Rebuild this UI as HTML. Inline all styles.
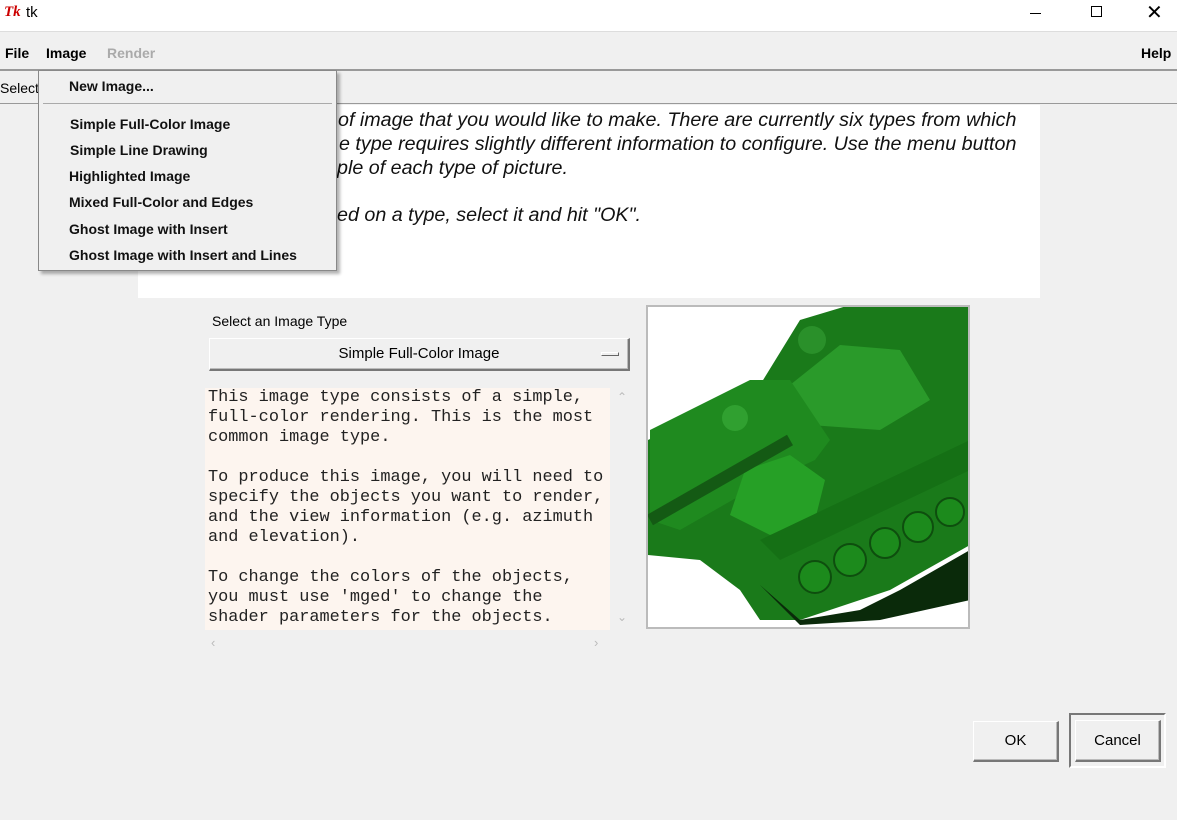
<!DOCTYPE html>
<html><head><style>
*{margin:0;padding:0;box-sizing:border-box}
body{width:1177px;height:820px;background:#f0f0f0;position:relative;overflow:hidden;font-family:"Liberation Sans",sans-serif}
.a{position:absolute}
.mi{position:absolute;left:30px;font-weight:bold;font-size:14px;color:#111}
.it{position:absolute;font-style:italic;font-size:19.7px;color:#111;white-space:pre}
.mono{font-family:"Liberation Mono",monospace;font-size:16.9px;line-height:20px;color:#222;white-space:pre}
.btn{position:absolute;background:#f0f0f0;border:1px solid #fff;border-right:2px solid #777;border-bottom:2px solid #777;box-shadow:inset -1px -1px #bbb;font-size:15px;text-align:center}
</style></head><body>
<div class="a" style="left:0;top:0;width:1177px;height:31px;background:#fff"></div>
<div class="a" style="left:4px;top:4px;color:#c00;font-style:italic;font-weight:bold;font-size:15px;font-family:'Liberation Serif',serif">Tk</div>
<div class="a" style="left:26px;top:4px;font-size:15px">tk</div>
<div class="a" style="left:1030px;top:13px;width:11px;height:1px;background:#000"></div>
<div class="a" style="left:1091px;top:6px;width:11px;height:11px;border:1px solid #000"></div>
<div class="a" style="left:1146px;top:0;font-size:20px;font-weight:300">✕</div>
<div class="a" style="left:0;top:31px;width:1177px;height:1px;background:#ddd"></div>
<div class="a" style="left:5px;top:45px;font-weight:bold;font-size:14px">File</div>
<div class="a" style="left:46px;top:45px;font-weight:bold;font-size:14px">Image</div>
<div class="a" style="left:107px;top:45px;font-weight:bold;font-size:14px;color:#aaa">Render</div>
<div class="a" style="left:1141px;top:45px;font-weight:bold;font-size:14px">Help</div>
<div class="a" style="left:0;top:69px;width:1177px;height:2px;background:#999"></div>
<div class="a" style="left:0;top:80px;font-size:14px">Select</div>
<div class="a" style="left:0;top:103px;width:1177px;height:1px;background:#999"></div>
<div class="a" style="left:138px;top:105px;width:902px;height:193px;background:#fff"></div>
<div class="it" style="left:338px;top:109px">of image that you would like to make. There are currently six types from which</div>
<div class="it" style="left:339px;top:133px">e type requires slightly different information to configure. Use the menu button</div>
<div class="it" style="left:337px;top:157px">ple of each type of picture.</div>
<div class="it" style="left:337px;top:204px">ed on a type, select it and hit "OK".</div>

<div class="a" style="left:38px;top:70px;width:299px;height:201px;background:#f0f0f0;border:1px solid #888;box-shadow:3px 3px 3px rgba(0,0,0,.3)">
<div class="mi" style="top:7px">New Image...</div>
<div class="a" style="left:4px;top:32px;width:289px;height:1px;background:#aaa"></div>
<div class="mi" style="top:45px;left:31px">Simple Full-Color Image</div>
<div class="mi" style="top:71px;left:31px">Simple Line Drawing</div>
<div class="mi" style="top:97px">Highlighted Image</div>
<div class="mi" style="top:123px">Mixed Full-Color and Edges</div>
<div class="mi" style="top:150px">Ghost Image with Insert</div>
<div class="mi" style="top:176px">Ghost Image with Insert and Lines</div>
</div>

<div class="a" style="left:212px;top:313px;font-size:14px">Select an Image Type</div>
<div class="btn" style="left:209px;top:338px;width:421px;height:33px;line-height:30px">Simple Full-Color Image
<div class="a" style="right:9px;top:13px;width:18px;height:4px;border:1px solid #fff;border-right-color:#666;border-bottom-color:#666"></div></div>
<div class="a mono" style="left:205px;top:388px;width:405px;height:242px;background:#fdf5ef;padding:0 3px;overflow:hidden">This image type consists of a simple,
full-color rendering. This is the most
common image type.

To produce this image, you will need to
specify the objects you want to render,
and the view information (e.g. azimuth
and elevation).

To change the colors of the objects,
you must use 'mged' to change the
shader parameters for the objects.</div>
<div class="a" style="left:617px;top:390px;color:#bbb;font-size:12px">⌃</div>
<div class="a" style="left:617px;top:610px;color:#bbb;font-size:12px">⌄</div>
<div class="a" style="left:211px;top:635px;color:#bbb;font-size:13px">‹</div>
<div class="a" style="left:594px;top:635px;color:#bbb;font-size:13px">›</div>

<div class="a" style="left:646px;top:305px;width:324px;height:324px;background:#fff;border:2px solid #bbb;overflow:hidden">
<svg width="322" height="322" viewBox="648 307 322 322">
<polygon points="648,440 760,385 800,320 850,305 970,305 970,545 890,590 800,620 760,620 740,590 700,560 648,555" fill="#1a7a1a"/>
<polygon points="760,585 800,620 860,610 900,590 970,550 970,600 880,620 800,625" fill="#0a2a0a"/>
<polygon points="790,385 840,345 900,350 930,400 880,430 810,425" fill="#2a9a2a"/>
<polygon points="650,430 750,380 790,380 830,440 815,460 750,490 680,530 650,520" fill="#1f8a1f"/>
<polygon points="745,470 790,455 825,480 815,520 770,535 730,515" fill="#26a026"/>
<line x1="650" y1="520" x2="790" y2="440" stroke="#145a14" stroke-width="12"/>
<circle cx="735" cy="418" r="13" fill="#30a030"/>
<circle cx="812" cy="340" r="14" fill="#2a902a"/>
<g fill="#1c8a1c" stroke="#0e4e0e" stroke-width="2"><circle cx="850" cy="560" r="16"/><circle cx="885" cy="543" r="15"/><circle cx="918" cy="527" r="15"/><circle cx="950" cy="512" r="14"/><circle cx="815" cy="577" r="16"/></g>
<polygon points="760,540 970,440 970,470 780,560" fill="#157015"/>
</svg></div>

<div class="btn" style="left:973px;top:721px;width:86px;height:41px;line-height:38px">OK</div>
<div class="a" style="left:1069px;top:713px;width:97px;height:55px;border:2px solid #777;border-right-color:#fff;border-bottom-color:#fff"></div>
<div class="btn" style="left:1075px;top:720px;width:86px;height:42px;line-height:39px">Cancel</div>
</body></html>
